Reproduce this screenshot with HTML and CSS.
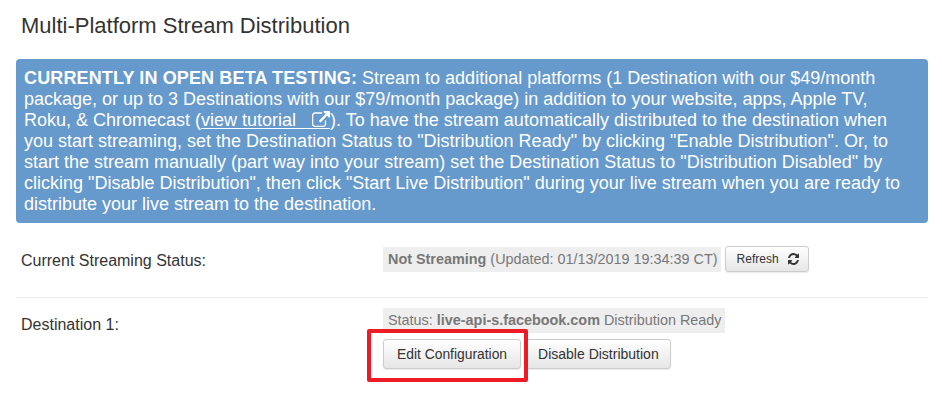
FILE: index.html
```html
<!DOCTYPE html>
<html lang="en">
<head>
<meta charset="utf-8">
<title>Multi-Platform Stream Distribution</title>
<link rel="stylesheet" href="styles.css">
</head>
<body>
<h1 class="title">Multi-Platform Stream Distribution</h1>
<div class="notice"><strong>CURRENTLY IN OPEN BETA TESTING:</strong> Stream to additional platforms (1 Destination with our $49/month<br>package, or up to 3 Destinations with our $79/month package) in addition to your website, apps, Apple TV,<br>Roku, &amp; Chromecast (<a class="tut" href="#">view tutorial <svg class="ext" viewBox="0 0 1792 1536" width="18" height="16" preserveAspectRatio="none"><path fill="#fff" d="M1408 928v320q0 119-84.5 203.5t-203.5 84.5h-832q-119 0-203.5-84.5t-84.5-203.5v-832q0-119 84.5-203.5t203.5-84.5h704q14 0 23 9t9 23v64q0 14-9 23t-23 9h-704q-66 0-113 47t-47 113v832q0 66 47 113t113 47h832q66 0 113-47t47-113v-320q0-14 9-23t23-9h64q14 0 23 9t9 23zm384-864v512q0 26-19 45t-45 19-45-19l-176-176-652 652q-10 10-23 10t-23-10l-114-114q-10-10-10-23t10-23l652-652-176-176q-19-19-19-45t19-45 45-19h512q26 0 45 19t19 45z"/></svg></a>). To have the stream automatically distributed to the destination when<br>you start streaming, set the Destination Status to "Distribution Ready" by clicking "Enable Distribution". Or, to<br>start the stream manually (part way into your stream) set the Destination Status to "Distribution Disabled" by<br>clicking "Disable Distribution", then click "Start Live Distribution" during your live stream when you are ready to<br>distribute your live stream to the destination.</div>
<div class="row row-status">
  <div class="label">Current Streaming Status:</div>
  <div class="value inline">
    <span class="status"><b>Not Streaming</b> (Updated: 01/13/2019 19:34:39 CT)</span>
    <button class="btn btn-sm" type="button">Refresh <svg class="refresh" viewBox="128 128 1536 1536" width="11" height="12" preserveAspectRatio="none"><path fill="#333" d="M1639 1056q0 5-1 7-64 268-268 434.5t-478 166.5q-146 0-282.5-55t-243.5-157l-129 129q-19 19-45 19t-45-19-19-45v-448q0-26 19-45t45-19h448q26 0 45 19t19 45-19 45l-137 137q71 66 161 102t187 36q134 0 250-65t186-179q11-17 53-117 8-23 30-23h192q13 0 22.5 9.5t9.5 22.5zm25-800v448q0 26-19 45t-45 19h-448q-26 0-45-19t-19-45 19-45l138-138q-148-137-349-137-134 0-250 65t-186 179q-11 17-53 117-8 23-30 23h-199q-13 0-22.5-9.5t-9.5-22.5v-7q65-268 270-434.5t480-166.5q146 0 284 55.5t245 156.5l130-129q19-19 45-19t45 19 19 45z"/></svg></button>
  </div>
</div>
<div class="row row-dest">
  <div class="label">Destination 1:</div>
  <div class="value">
    <span class="status status-dest">Status: <b>live-api-s.facebook.com</b> Distribution Ready</span>
    <div class="actions">
      <span class="highlight"><button class="btn" type="button">Edit Configuration</button></span>
      <button class="btn btn-slim" type="button">Disable Distribution</button>
    </div>
  </div>
</div>
</body>
</html>
```
FILE: styles.css
```css
html, body { margin: 0; padding: 0; }
body {
  width: 942px;
  height: 418px;
  overflow: hidden;
  background: #fff;
  color: #333;
  font-family: "Liberation Sans", Arial, sans-serif;
  font-size: 14px;
}
.title {
  margin: 0;
  padding: 12px 0 0 21px;
  font-size: 22px;
  line-height: 27px;
  font-weight: 400;
  color: #333;
}
.notice {
  margin: 20px 14px 0 16px;
  padding: 9px 8px 8px;
  background: #6699cc;
  border-radius: 4px;
  color: #fff;
  font-size: 18px;
  line-height: 21px;
  white-space: nowrap;
}
.notice strong { letter-spacing: 0.13px; }
.tut {
  color: #fff;
  text-decoration: none;
  background: linear-gradient(#fff, #fff) no-repeat 0 calc(100% - 1px) / 100% 1px;
}
.ext { vertical-align: -1px; margin-left: 11px; }
.row { display: flex; margin: 0 14px 0 16px; padding-left: 5px; }
.row-status { padding-top: 23px; padding-bottom: 25px; border-bottom: 1px solid #eee; }
.row-dest { padding-top: 10px; }
.label { width: 362px; font-size: 16px; line-height: 20px; color: #333; }
.row-status .label { padding-top: 5px; }
.row-dest .label { padding-top: 7px; }
.inline { display: flex; align-items: center; gap: 4px; }
.status {
  background: #eee;
  color: #777;
  font-size: 14.4px;
  line-height: 25px;
  padding: 0 3px 0 5px;
  display: inline-block;
}
.status b { font-weight: 700; }
.actions { display: flex; gap: 4px; margin-top: 6px; }
.highlight { display: block; position: relative; }
.highlight::after {
  content: "";
  position: absolute;
  left: -16px;
  right: -7px;
  top: -10px;
  bottom: -13px;
  border: 4px solid #ed1c24;
  border-radius: 2px;
  pointer-events: none;
}
.btn {
  font-family: inherit;
  font-size: 13.85px;
  line-height: 20px;
  color: #333;
  height: 30px;
  padding: 0 13px;
  border: 1px solid #ccc;
  border-radius: 3px;
  background: linear-gradient(#fff, #e6e6e6);
  box-shadow: 0 1px 1px rgba(0,0,0,.08);
}
.btn-slim { padding: 0 11px 0 12px; font-size: 14px; }
.btn-sm { font-size: 12px; height: 26px; padding: 0 9px 0 11px; }
.refresh { vertical-align: -2px; margin-left: 6px; }
```
